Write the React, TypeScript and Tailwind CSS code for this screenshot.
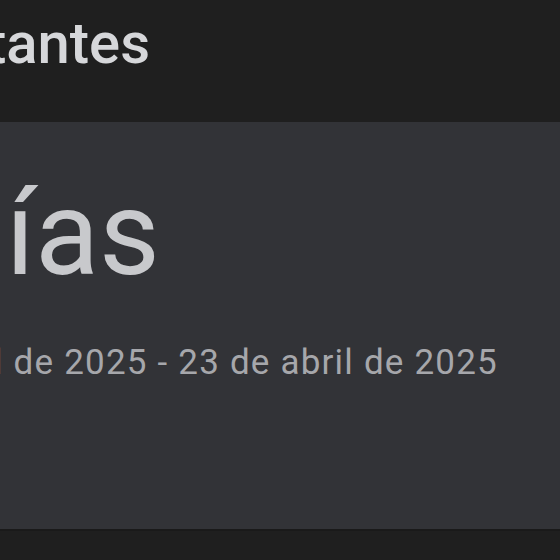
const font = { fontFamily: 'Roboto, "Noto Sans", sans-serif' }

/** Countdown card: days left until a target date. */
export default function App() {
  return (
    <div className="flex h-[560px] w-[560px] flex-col overflow-hidden bg-[#1f1f1f]" style={font}>
      <header className="h-[122px] shrink-0 pt-[14px]">
        <div className="flex w-[150px] justify-end overflow-hidden">
          <h1 className="whitespace-nowrap text-[58px] font-medium leading-none text-[#d6d7da]">Días restantes</h1>
        </div>
      </header>

      <section className="h-[407px] shrink-0 bg-[#323337] pt-[53px]">
        <div className="flex w-[160px] justify-end overflow-hidden">
          <p className="whitespace-nowrap text-[118px] leading-none text-[#c8c9cc]">15 días</p>
        </div>
        <div className="mt-[52px] flex w-[498px] justify-end overflow-hidden">
          <p className="whitespace-nowrap text-[35px] leading-none tracking-[1.2px] text-[#a6a7ab]">
            8 de abril de 2025 - 23 de abril de 2025
          </p>
        </div>
      </section>
      <div className="h-[2px] shrink-0 bg-[#1a1a1a]" />
    </div>
  )
}
